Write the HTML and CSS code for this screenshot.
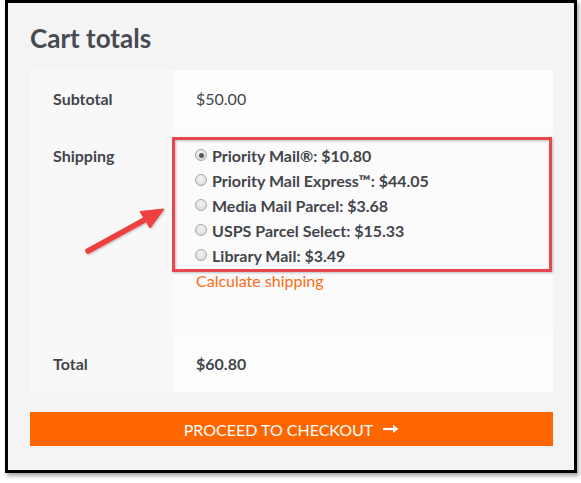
FILE: index.html
```html
<!DOCTYPE html>
<html lang="en">
<head>
<meta charset="utf-8">
<title>Cart totals</title>
<link rel="stylesheet" href="styles.css">
</head>
<body>
<div class="frame">
  <h2 class="title">Cart totals</h2>
  <table class="totals">
    <tbody>
      <tr class="row-subtotal">
        <th>Subtotal</th>
        <td>$50.00</td>
      </tr>
      <tr class="row-shipping">
        <th>Shipping</th>
        <td>
          <ul class="methods">
            <li><span class="radio checked"></span>Priority Mail®: $10.80</li>
            <li><span class="radio"></span>Priority Mail Express™: $44.05</li>
            <li><span class="radio"></span>Media Mail Parcel: $3.68</li>
            <li><span class="radio"></span>USPS Parcel Select: $15.33</li>
            <li><span class="radio"></span>Library Mail: $3.49</li>
          </ul>
          <p class="calc">Calculate shipping</p>
        </td>
      </tr>
      <tr class="row-total">
        <th>Total</th>
        <td class="strong">$60.80</td>
      </tr>
    </tbody>
  </table>
  <a class="checkout">PROCEED TO CHECKOUT
    <svg class="arrow-icon" width="16" height="10" viewBox="0 0 16 10"><path d="M0 5H11" stroke="#fff" stroke-width="2.2"/><path d="M10 1L15.5 5L10 9Z" fill="#fff"/></svg>
  </a>
</div>
<svg class="annotation" width="581" height="483" viewBox="0 0 581 483">
  <defs>
    <filter id="sh" x="-10%" y="-10%" width="120%" height="120%">
      <feDropShadow dx="1" dy="1" stdDeviation="1" flood-color="#000" flood-opacity="0.25"/>
    </filter>
  </defs>
  <rect x="173.5" y="138.5" width="377" height="132" fill="none" stroke="#e8464b" stroke-width="3" filter="url(#sh)"/>
  <g filter="url(#sh)">
    <path d="M88 251L148 218" stroke="#ef4040" stroke-width="5.5" stroke-linecap="round"/>
    <path d="M164 209L140 211.5L150 228Z" fill="#ef4040" stroke="#ef4040" stroke-width="1" stroke-linejoin="round"/>
  </g>
</svg>
</body>
</html>
```

FILE: styles.css
```css
html, body {
  margin: 0;
  padding: 0;
  background: #ffffff;
}

body {
  font-family: Lato, "Open Sans", sans-serif;
  color: #43454b;
  width: 581px;
  height: 483px;
  overflow: hidden;
  position: relative;
}

.frame {
  box-sizing: border-box;
  margin-left: 5px;
  width: 572px;
  height: 473px;
  border: 3px solid #000;
  background: #f4f4f4;
  box-shadow: 2px 3px 4px rgba(0, 0, 0, 0.35);
  padding: 0 21px 0 22px;
  display: flex;
  flex-direction: column;
}

.title {
  margin: 15px 0 0 0;
  font-size: 26px;
  line-height: 40px;
  font-weight: 700;
  color: #474a51;
  height: 52px;
}

.totals {
  width: 523px;
  border-collapse: collapse;
  border-spacing: 0;
  font-size: 16px;
  line-height: 25px;
}

.totals th {
  width: 143px;
  box-sizing: border-box;
  background: #f8f8f8;
  text-align: left;
  vertical-align: top;
  font-weight: 700;
  padding: 17px 0 16px 23px;
}

.totals td {
  background: #fdfdfd;
  vertical-align: top;
  padding: 17px 0 16px 23px;
}

.row-subtotal th,
.row-subtotal td {
  padding-top: 16px;
  padding-bottom: 16px;
}

.row-shipping th,
.row-shipping td {
  padding-top: 16px;
  padding-bottom: 16px;
}

.row-shipping td {
  background: #fbfbfb;
}

.strong {
  font-weight: 700;
}

.methods {
  list-style: none;
  margin: 0;
  padding: 0;
}

.methods li {
  display: flex;
  align-items: center;
  font-weight: 700;
  margin-left: -1px;
}

.radio {
  box-sizing: border-box;
  width: 12px;
  height: 12px;
  border-radius: 50%;
  border: 1px solid #a9a9a9;
  background: radial-gradient(circle at 50% 35%, #f4f4f4 0%, #dedede 70%, #cfcfcf 100%);
  margin-right: 5px;
  margin-top: -1px;
  position: relative;
  flex: none;
}

.radio.checked::after {
  content: "";
  position: absolute;
  left: 2.5px;
  top: 2.5px;
  width: 5px;
  height: 5px;
  border-radius: 50%;
  background: #555;
}

.calc {
  margin: 0 0 25px 0;
  color: #ff6a13;
}

.checkout {
  margin-top: 20px;
  height: 34px;
  background: #ff6600;
  color: #fff;
  font-size: 16px;
  display: flex;
  align-items: center;
  justify-content: center;
  gap: 10px;
}

.arrow-icon {
  display: block;
}

.annotation {
  position: absolute;
  left: 0;
  top: 0;
  pointer-events: none;
}
```
